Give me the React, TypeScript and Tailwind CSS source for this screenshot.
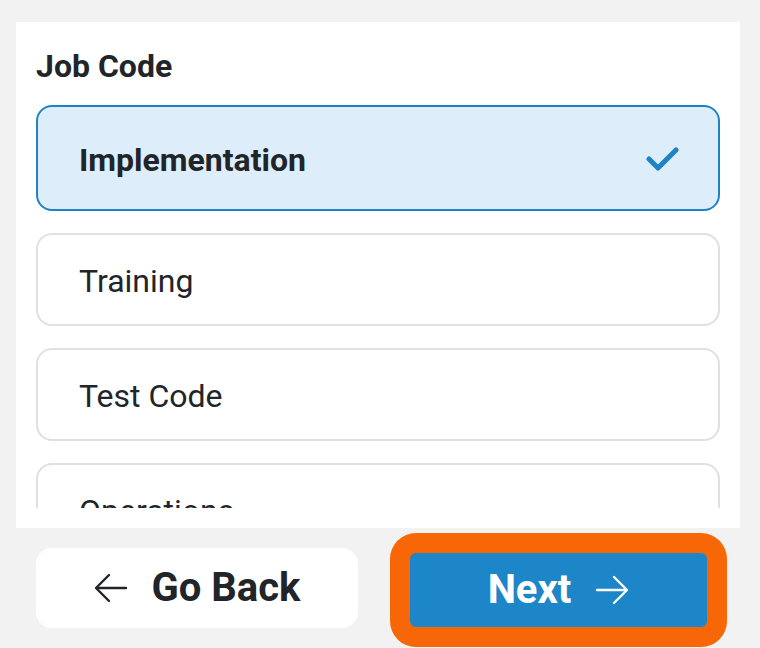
const options = [
  { label: "Implementation", selected: true },
  { label: "Training", selected: false },
  { label: "Test Code", selected: false },
  { label: "Operations", selected: false },
];

function ArrowLeft() {
  return (
    <svg width="34" height="30" viewBox="0 0 34 30" fill="none" stroke="currentColor" strokeWidth="2.4" strokeLinecap="round" strokeLinejoin="round">
      <path d="M32 15H3" />
      <path d="M15 2L2 15l13 13" />
    </svg>
  );
}

function ArrowRight() {
  return (
    <svg width="34" height="30" viewBox="0 0 34 30" fill="none" stroke="currentColor" strokeWidth="2.4" strokeLinecap="round" strokeLinejoin="round">
      <path d="M2 15h29" />
      <path d="M19 2l13 13-13 13" />
    </svg>
  );
}

function Check() {
  return (
    <svg width="34" height="28" viewBox="0 0 34 28" fill="none" stroke="#1d83c6" strokeWidth="5" strokeLinecap="round" strokeLinejoin="round">
      <path d="M4 15l9 9L31 6" />
    </svg>
  );
}

export default function App() {
  return (
    <div
      className="h-[648px] w-[760px] overflow-hidden bg-[#f2f2f2] text-[#212529]"
      style={{ fontFamily: "Roboto, 'Liberation Sans', sans-serif" }}
    >
      {/* panel */}
      <div className="ml-4 mt-[22px] flex h-[506px] w-[724px] flex-col bg-white px-5 pb-5">
        <h2 className="pt-6 text-[32px] font-bold leading-[40px]">Job Code</h2>
        <div className="mt-[19px] flex min-h-0 flex-1 flex-col gap-[22px] overflow-hidden">
          {options.map((o) =>
            o.selected ? (
              <div
                key={o.label}
                className="flex h-[106px] shrink-0 items-center justify-between rounded-2xl border-2 border-[#1d83c6] bg-[#ddedf9] pl-[41px] pr-[39px]"
              >
                <span className="pt-[3px] text-[32px] font-bold">{o.label}</span>
                <Check />
              </div>
            ) : (
              <div
                key={o.label}
                className="flex h-[93px] shrink-0 items-center rounded-2xl border-2 border-[#e0e0e0] bg-white pl-[41px]"
              >
                <span className="pt-[2px] text-[32px]">{o.label}</span>
              </div>
            )
          )}
        </div>
      </div>

      {/* footer buttons */}
      <div className="flex items-start pl-9">
        <button className="mt-5 flex h-20 w-[322px] items-center justify-center gap-6 rounded-2xl bg-white text-[40px] font-bold text-[#212529]">
          <ArrowLeft />
          <span>Go Back</span>
        </button>
        <div className="ml-8 mt-[5px] rounded-[26px] bg-[#f76707] p-5">
          <button className="flex h-[74px] w-[297px] items-center justify-center gap-6 rounded-md bg-[#1d86c8] text-[40px] font-bold text-white">
            <span>Next</span>
            <ArrowRight />
          </button>
        </div>
      </div>
    </div>
  );
}
